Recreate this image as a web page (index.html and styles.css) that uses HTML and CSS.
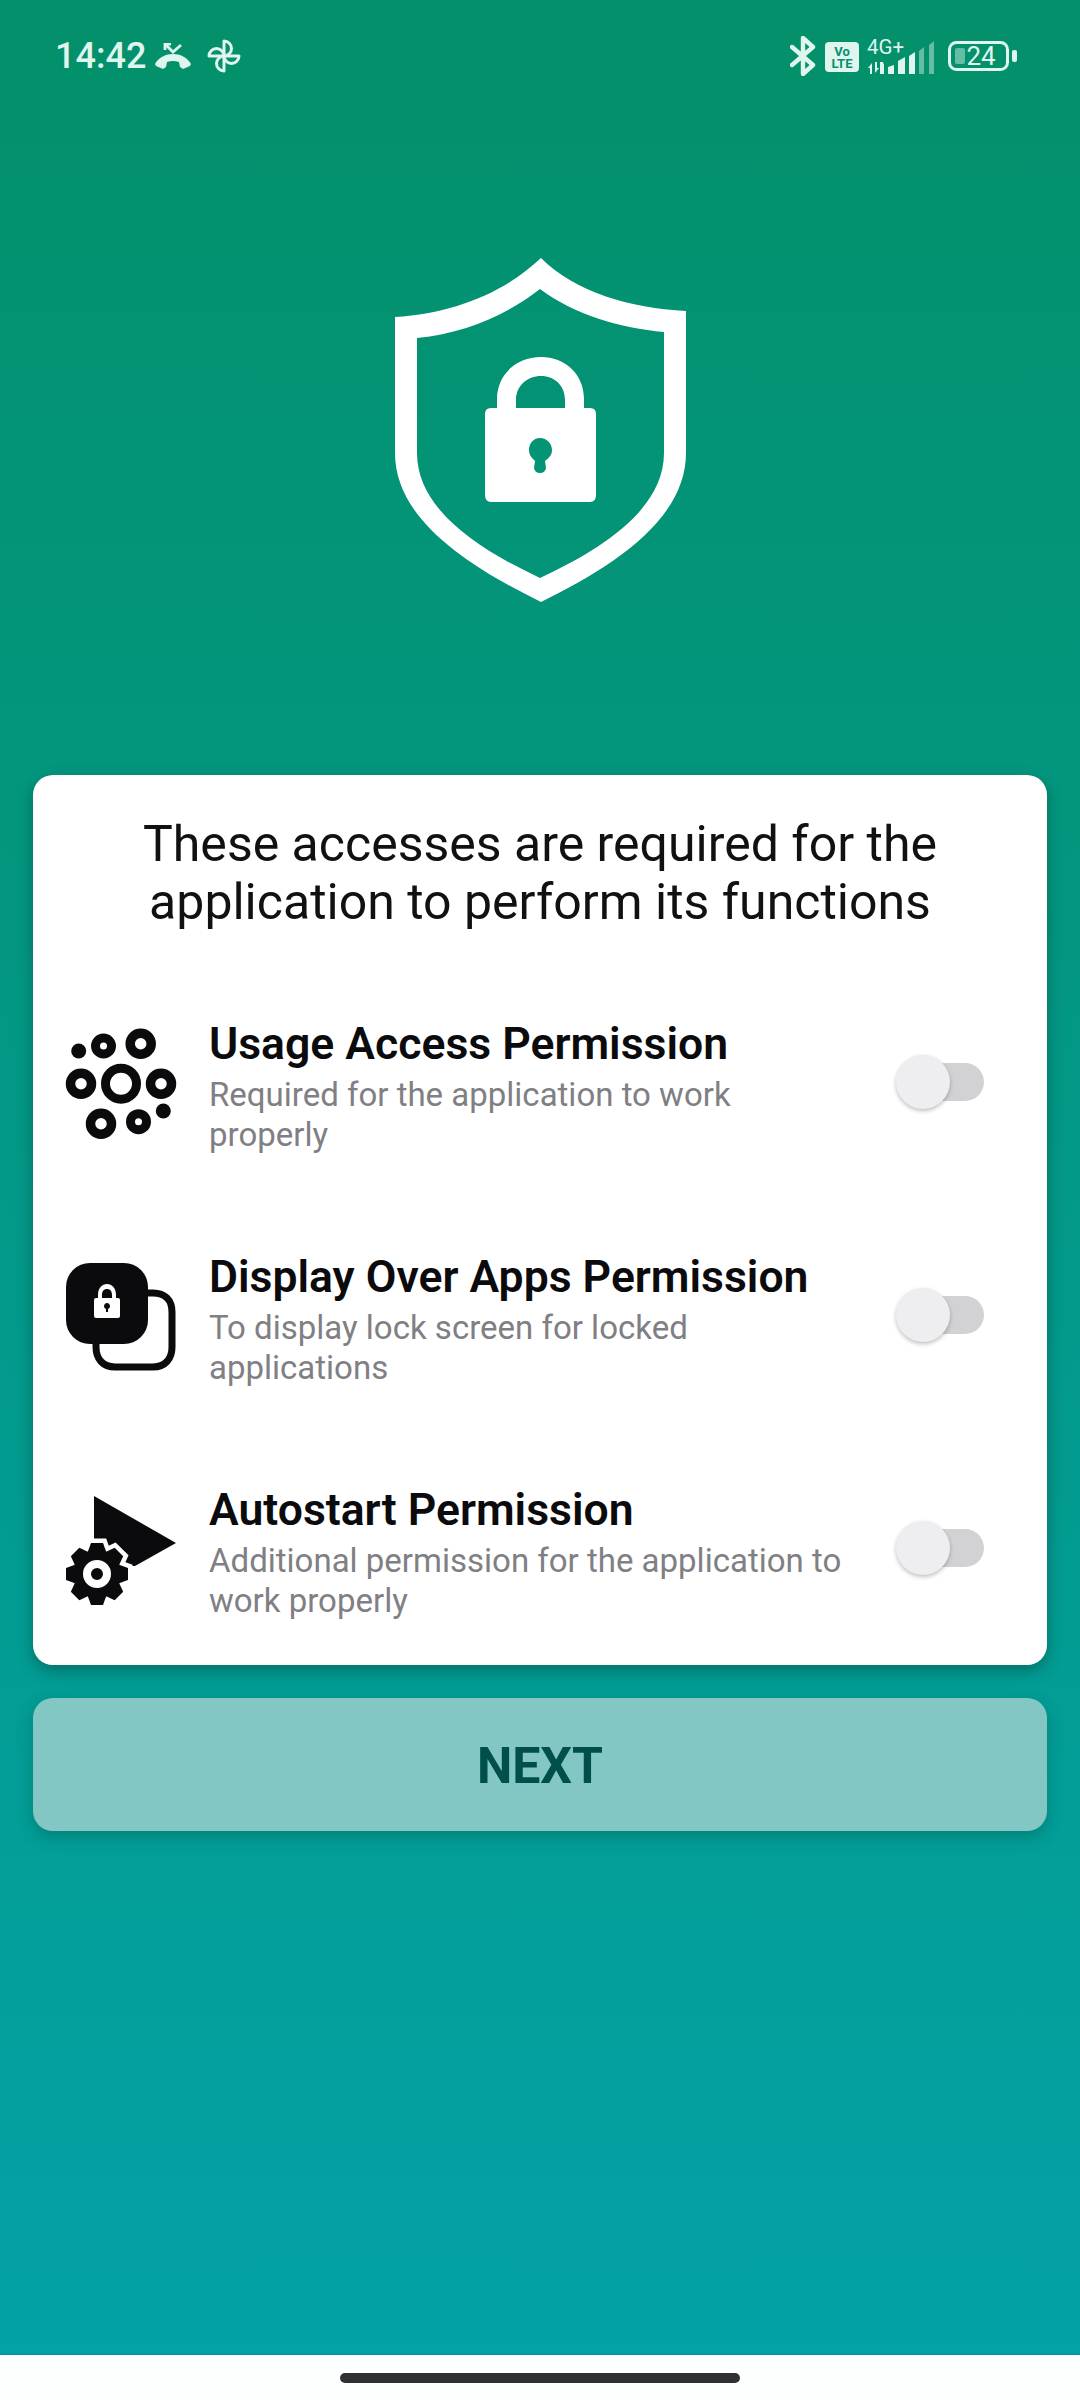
FILE: index.html
```html
<!DOCTYPE html>
<html lang="en">

<head>
    <meta charset="UTF-8">
    <meta name="viewport" content="width=device-width, initial-scale=1.0">
    <title>Permissions</title>
    <link rel="stylesheet" href="styles.css">
</head>

<body>
    <div class="screen">
        <header class="status-bar">
            <div class="status-left">
                <span class="clock">14:42</span>
                <!-- missed call -->
                <svg class="ic-call" viewBox="0 0 36 28" width="36" height="28">
                    <path d="M10 1l8 8 8-7" fill="none" stroke="currentColor" stroke-width="2.800" />
                    <path d="M9 1h7M10 0v7" fill="none" stroke="currentColor" stroke-width="2.800" />
                    <path d="M0 21C4 14 11 11 18 11S32 14 36 21L35 23L28 26L25 24L24 19C20 17.500 16 17.500 12 19L11 24L8 26L1 23Z" fill="currentColor" />
                </svg>
                <!-- pinwheel -->
                <svg class="ic-wheel" viewBox="0 0 34 34" width="34" height="34">
                    <g fill="none" stroke="currentColor" stroke-width="3" stroke-linejoin="round">
                        <path d="M17 17V2A7.500 7.500 0 0 1 17 17Z" />
                        <path d="M17 17V2A7.500 7.500 0 0 1 17 17Z" transform="rotate(90 17 17)" />
                        <path d="M17 17V2A7.500 7.500 0 0 1 17 17Z" transform="rotate(180 17 17)" />
                        <path d="M17 17V2A7.500 7.500 0 0 1 17 17Z" transform="rotate(270 17 17)" />
                    </g>
                </svg>
            </div>
            <div class="status-right">
                <svg class="ic-bt" viewBox="0 0 26 40" width="26" height="40">
                    <path d="M2 11l21 18-10 9V2l10 9L2 29" fill="none" stroke="currentColor" stroke-width="4.400" stroke-linejoin="round" stroke-linecap="round" />
                </svg>
                <svg class="ic-volte" viewBox="0 0 34 30" width="34" height="30">
                    <rect width="34" height="30" rx="4" fill="currentColor" />
                    <text x="17" y="14" class="volte-text">Vo</text>
                    <text x="17" y="26" class="volte-text">LTE</text>
                </svg>
                <svg class="ic-signal" viewBox="0 0 68 44" width="68" height="44">
                    <text x="0" y="22" class="net-text">4G+</text>
                    <path d="M5 42V31L1 36H3V42zM8 30V41L12 36H10V30z" fill="currentColor" />
                    <path d="M13 30h3l1 3v9h-4z" fill="currentColor" />
                    <path d="M21 35L27 33V42H21z" fill="currentColor" />
                    <path d="M31 29L38 25V42H31z" fill="currentColor" />
                    <path d="M42 24L48 20V42H42z" fill="currentColor" />
                    <path d="M52 19L57 15V42H52z" fill="currentColor" opacity="0.45" />
                    <path d="M62 13L67 9V42H62z" fill="currentColor" opacity="0.45" />
                </svg>
                <svg class="ic-battery" viewBox="0 0 70 34" width="70" height="34">
                    <rect x="1.500" y="3.500" width="58" height="27" rx="7" fill="none" stroke="currentColor" stroke-width="3" />
                    <rect x="7" y="9" width="10" height="16" rx="2" fill="currentColor" opacity="0.45" />
                    <rect x="64" y="11" width="5" height="12" rx="2" fill="currentColor" />
                    <text x="33" y="26" class="batt-text">24</text>
                </svg>
            </div>
        </header>

        <div class="hero">
            <svg class="shield" viewBox="380 250 320 360" width="320" height="360">
                <path fill="#fff" fill-rule="evenodd" d="M541 258C505 292 455 313 395 317V453C395 520 470 567 541 602C612 567 686 520 686 453V311C630 308 575 292 541 258ZM540 289C505 316 465 333 417 338V453C417 510 480 550 540 578C600 550 664 510 664 453V332C620 328 575 315 540 289Z" />
                <path fill="#fff" fill-rule="evenodd" d="M497 408V399C497 374 517 357 541 357S584 374 584 399V408H590Q596 408 596 414V495Q596 502 590 502H491Q485 502 485 495V414Q485 408 491 408ZM516 408H565V400C565 386 555 376 541 376S516 386 516 400ZM540 438C533 438 529 444 529 450C529 455 532 458 535 461L534 468Q535 473 540 473T546 468L545 461C549 458 552 455 552 450C552 444 547 438 540 438Z" />
            </svg>
        </div>

        <main class="card">
            <h1 class="card-title">These accesses are required for the application to perform its functions</h1>

            <div class="perm-row">
                <svg class="perm-icon" viewBox="60 1023 120 120" width="120" height="120">
                    <circle cx="78.700" cy="1050" r="7.500" />
                    <g fill="none" stroke="#0b0b0d">
                        <circle cx="103.500" cy="1045" r="8" stroke-width="9" />
                        <circle cx="140.700" cy="1042.700" r="10.500" stroke-width="9.500" />
                        <circle cx="81" cy="1082.700" r="10.500" stroke-width="9.500" />
                        <circle cx="121" cy="1082.700" r="15.500" stroke-width="9" />
                        <circle cx="161" cy="1082.700" r="10.500" stroke-width="9.500" />
                        <circle cx="101" cy="1122.700" r="10.500" stroke-width="9.500" />
                        <circle cx="138.500" cy="1120.700" r="8" stroke-width="9" />
                    </g>
                    <circle cx="163.300" cy="1110" r="7.500" />
                </svg>
                <div class="perm-text">
                    <div class="perm-name">Usage Access Permission</div>
                    <div class="perm-desc">Required for the application to work properly</div>
                </div>
                <div class="switch"><span class="switch-thumb"></span></div>
            </div>

            <div class="perm-row">
                <svg class="perm-icon" viewBox="60 1256 120 120" width="120" height="120">
                    <path d="M148 1292H153C165 1292 172 1299 172 1311V1346C172 1358 165 1366 153 1366H115C103 1366 96 1358 96 1346V1340" fill="none" stroke="#0b0b0d" stroke-width="7" />
                    <rect x="66" y="1262" width="82" height="81" rx="24" />
                    <path fill="#fff" fill-rule="evenodd" d="M98 1297V1294C98 1287 102 1283 107 1283S116 1287 116 1294V1297H118Q120 1297 120 1299V1315Q120 1317 118 1317H96Q94 1317 94 1315V1299Q94 1297 96 1297ZM102 1297H112V1294C112 1290 110 1288 107 1288S102 1290 102 1294ZM107 1302C105 1302 104 1304 104 1305C104 1307 105 1307 106 1308V1311H108V1308C109 1307 110 1307 110 1305C110 1304 109 1302 107 1302Z" />
                </svg>
                <div class="perm-text">
                    <div class="perm-name">Display Over Apps Permission</div>
                    <div class="perm-desc">To display lock screen for locked applications</div>
                </div>
                <div class="switch"><span class="switch-thumb"></span></div>
            </div>

            <div class="perm-row">
                <svg class="perm-icon" viewBox="60 1489 120 120" width="120" height="120">
                    <defs>
                        <g id="gear">
                            <circle cx="97" cy="1573" r="24" />
                            <path id="tooth" d="M91 1542H103L107 1553H87Z" />
                            <use href="#tooth" transform="rotate(45 97 1573)" />
                            <use href="#tooth" transform="rotate(90 97 1573)" />
                            <use href="#tooth" transform="rotate(135 97 1573)" />
                            <use href="#tooth" transform="rotate(180 97 1573)" />
                            <use href="#tooth" transform="rotate(225 97 1573)" />
                            <use href="#tooth" transform="rotate(270 97 1573)" />
                            <use href="#tooth" transform="rotate(315 97 1573)" />
                        </g>
                    </defs>
                    <path d="M94 1495L176 1542L135 1565H94Z" />
                    <use href="#gear" class="gear-halo" />
                    <use href="#gear" />
                    <circle cx="97" cy="1573" r="10" fill="none" stroke="#fff" stroke-width="8" />
                </svg>
                <div class="perm-text">
                    <div class="perm-name">Autostart Permission</div>
                    <div class="perm-desc">Additional permission for the application to work properly</div>
                </div>
                <div class="switch"><span class="switch-thumb"></span></div>
            </div>
        </main>

        <a class="next-button">NEXT</a>
    </div>

    <footer class="nav-bar">
        <span class="nav-pill"></span>
    </footer>
</body>

</html>
```
FILE: styles.css
```css
* {
    box-sizing: border-box;
}

html,
body {
    margin: 0;
    padding: 0;
}

body {
    width: 1080px;
    height: 2400px;
    display: flex;
    flex-direction: column;
    font-family: Roboto, sans-serif;
    background: #fff;
    overflow: hidden;
}

.screen {
    height: 2355px;
    padding: 0 33px;
    display: flex;
    flex-direction: column;
    background: linear-gradient(180deg, #03906a 0%, #03a2a6 100%);
    box-shadow: 0 -2px 0 #059a98 inset;
}

/* status bar */
.status-bar {
    height: 110px;
    margin: 0 -33px;
    padding: 2px 62px 0 55px;
    display: flex;
    justify-content: space-between;
    align-items: center;
    color: #dff5ee;
}

.status-left,
.status-right {
    display: flex;
    align-items: center;
}

.clock {
    font-size: 36px;
    font-weight: 500;
    line-height: 40px;
}

.ic-call {
    margin-left: 9px;
    margin-top: 2px;
}

.ic-wheel {
    margin-left: 16px;
}

.ic-bt {
    margin-right: 9px;
}

.ic-volte {
    margin-right: 8px;
    margin-top: 1px;
}

.ic-signal {
    margin-right: 13px;
    margin-top: -5px;
}

.volte-text {
    font-size: 13px;
    font-weight: 700;
    text-anchor: middle;
    fill: #059070;
}

.net-text {
    font-size: 20.500px;
    fill: currentColor;
}

.batt-text {
    font-size: 26px;
    text-anchor: middle;
    fill: currentColor;
}

.gear-halo {
    fill: #fff;
    stroke: #fff;
    stroke-width: 9px;
}

/* shield */
.hero {
    height: 665px;
    padding-top: 140px;
    display: flex;
    justify-content: center;
}

/* permissions card */
.card {
    height: 890px;
    padding: 40px 0 0;
    border-radius: 20px;
    background: #fff;
    box-shadow: 0 6px 16px rgba(0, 60, 50, 0.45);
}

.card-title {
    margin: 0 auto 93px;
    width: 860px;
    font-size: 50px;
    font-weight: 400;
    line-height: 58px;
    text-align: center;
    color: #111;
}

.perm-row {
    height: 233px;
    padding: 0 63px 0 27px;
    display: flex;
    align-items: flex-start;
}

.perm-icon {
    flex: none;
    fill: #0b0b0d;
}

.perm-text {
    width: 640px;
    margin: -5px 0 0 29px;
    flex: none;
}

.perm-name {
    font-size: 44.500px;
    font-weight: 600;
    line-height: 50px;
    color: #0b0b0d;
}

.perm-desc {
    margin-top: 6px;
    font-size: 33px;
    line-height: 40px;
    color: #808084;
}

.switch {
    position: relative;
    width: 82px;
    height: 38px;
    margin: 39px 0 0 auto;
    border-radius: 19px;
    background: #d2d2d4;
}

.switch-thumb {
    position: absolute;
    left: -6px;
    top: -8px;
    width: 54px;
    height: 54px;
    border-radius: 50%;
    background: #eeeef0;
    box-shadow: 0 2px 4px rgba(0, 0, 0, 0.25);
}

/* next button */
.next-button {
    height: 133px;
    margin-top: 33px;
    padding-top: 3px;
    display: flex;
    justify-content: center;
    align-items: center;
    border-radius: 20px;
    background: #82c7c4;
    box-shadow: 0 6px 16px rgba(0, 60, 50, 0.3);
    font-size: 50px;
    font-weight: 700;
    color: #004f4b;
}

/* bottom nav */
.nav-bar {
    height: 45px;
    padding-top: 18px;
    display: flex;
    justify-content: center;
    align-items: flex-start;
    background: #fdfffe;
}

.nav-pill {
    width: 400px;
    height: 10px;
    border-radius: 5px;
    background: #2f3033;
}
```
